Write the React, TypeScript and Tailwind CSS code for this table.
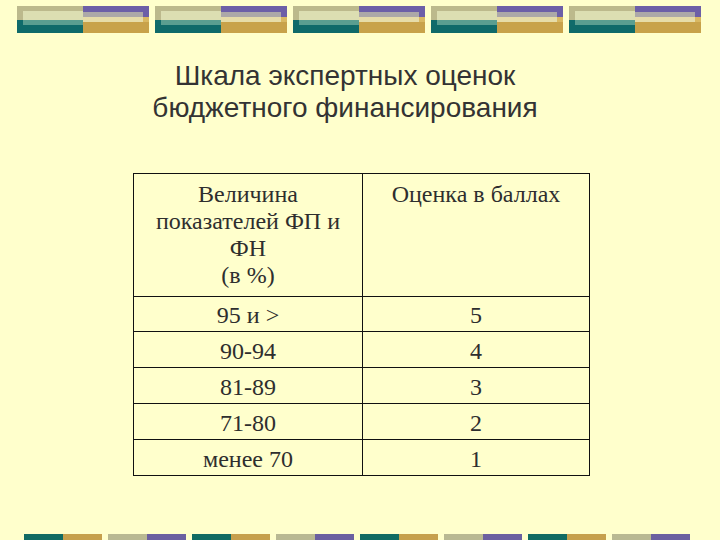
import React from "react";

function TopGroup() {
  return (
    <div className="flex h-[27px] w-[132px]">
      <div className="flex w-[66px] flex-col">
        <div className="h-[14px] bg-[#bcb98c] pt-[5px] pl-[6px]">
          <div className="h-[9px] bg-[#dcdeb2]" />
        </div>
        <div className="h-[5px] bg-[#106b6b] pl-[6px]">
          <div className="h-[5px] bg-[#5a9e90]" />
        </div>
        <div className="h-[8px] bg-[#0f6a69]" />
      </div>
      <div className="flex w-[66px] flex-col">
        <div className="h-[6px] bg-[#6c5fa7]" />
        <div className="h-[5px] bg-[#6c5fa7] pr-[6px]">
          <div className="h-[5px] bg-[#aca8a8]" />
        </div>
        <div className="h-[5px] bg-[#d9b862] pr-[6px]">
          <div className="h-[5px] bg-[#e6dca8]" />
        </div>
        <div className="h-[11px] bg-[#c8a24a]" />
      </div>
    </div>
  );
}

function BottomGroup() {
  return (
    <div className="flex h-[6px] gap-[6px]">
      <div className="flex">
        <div className="h-[6px] w-[39px] bg-[#116b63]" />
        <div className="h-[6px] w-[39px] bg-[#c6a04c]" />
      </div>
      <div className="flex">
        <div className="h-[6px] w-[39px] bg-[#b9b992]" />
        <div className="h-[6px] w-[39px] bg-[#6b60a0]" />
      </div>
    </div>
  );
}

const rows: [string, string][] = [
  ["95 и >", "5"],
  ["90-94", "4"],
  ["81-89", "3"],
  ["71-80", "2"],
  ["менее 70", "1"],
];

export default function App() {
  return (
    <div className="flex h-[540px] w-[720px] flex-col overflow-hidden bg-[#ffffcc]">
      <div className="flex gap-[6px] pt-[6px] pl-[17px]">
        <TopGroup />
        <TopGroup />
        <TopGroup />
        <TopGroup />
        <TopGroup />
      </div>
      <div
        className="mt-[27px] w-[690px] text-center text-[28px] leading-[32px] text-[#333333]"
        style={{ fontFamily: '"Liberation Sans", Arial, sans-serif' }}
      >
        <div>Шкала экспертных оценок</div>
        <div>бюджетного финансирования</div>
      </div>
      <div className="mt-[49px] ml-[133px]">
        <table
          className="w-[457px] border-collapse text-center text-[24px] leading-[27px] text-[#2e2e2e]"
          style={{ fontFamily: '"Liberation Serif", "Times New Roman", serif' }}
        >
          <tbody>
            <tr className="h-[123px]">
              <td className="w-[229px] border-[1.5px] border-[#111111] px-1 pt-[7px] align-top">
                Величина
                <br />
                показателей ФП и
                <br />
                ФН
                <br />
                (в %)
              </td>
              <td className="border-[1.5px] border-[#111111] px-1 pt-[7px] align-top">
                Оценка в баллах
              </td>
            </tr>
            {rows.map(([a, b], i) => (
              <tr key={i} className={i === 0 ? "h-[35px]" : "h-[36px]"}>
                <td className="border-[1.5px] border-[#111111] pt-[3px] align-middle">{a}</td>
                <td className="border-[1.5px] border-[#111111] pt-[3px] align-middle">{b}</td>
              </tr>
            ))}
          </tbody>
        </table>
      </div>
      <div className="flex-1" />
      <div className="flex gap-[6px] pl-[24px]">
        <BottomGroup />
        <BottomGroup />
        <BottomGroup />
        <BottomGroup />
      </div>
    </div>
  );
}
